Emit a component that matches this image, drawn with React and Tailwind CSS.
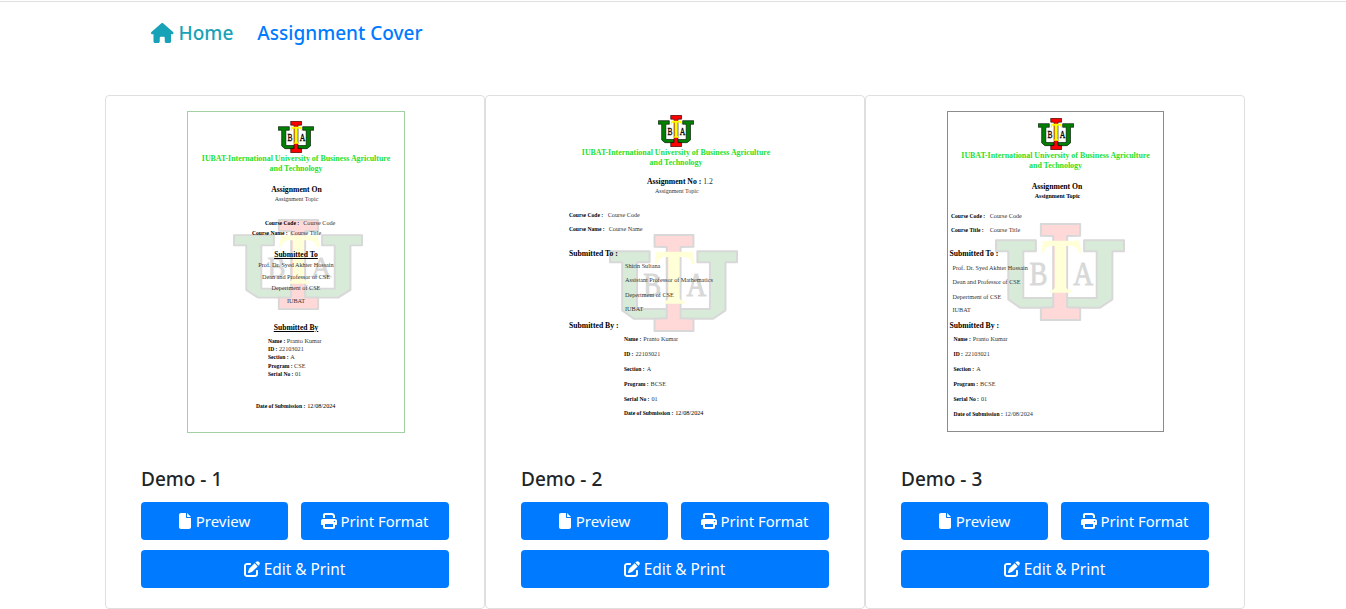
import React from "react";
import { FaHouse, FaFile, FaPrint, FaPenToSquare } from "react-icons/fa6";

function Emblem({ className }) {
  return (
    <svg viewBox="-3 -3 391 294" preserveAspectRatio="none" className={className}>
      <g stroke="#000" strokeWidth="6" strokeLinejoin="round">
        <path fill="#008000" d="M0 49H120V82H82V222H173V251H72L37 226V82H0Z" />
        <path fill="#008000" d="M385 49H265V82H303V222H212V251H313L350 226V82H385Z" />
        <path fill="#f00" d="M135 0H253V35L214 36V250L253 251V288H135V251L172 250V36L135 35Z" />
      </g>
      <path
        fill="#ff0"
        d="M135 88L141 50H251L257 88H250Q246 68 228 66H211V190Q212 197 227 199V206H165V199Q176 197 177 190V66H164Q146 68 142 88Z"
      />
      <g fontFamily="Liberation Serif, serif" fontSize="98" fill="#000" stroke="#000" strokeWidth="3" textAnchor="middle">
        <text x="128" y="183" textLength="54" lengthAdjust="spacingAndGlyphs">B</text>
        <text x="262" y="183" textLength="60" lengthAdjust="spacingAndGlyphs">A</text>
      </g>
    </svg>
  );
}

const covers = [
  {
    name: "Demo - 1",
    frame: "ml-0.5 w-[218px] h-[322px] border-[#a3d0a5]",
    mark: "left-[45px] top-[107px] w-[130px] h-[91px]",
    logo: "mt-[9px]",
    title: "mt-px",
    rows: [
      { c: "mt-[11.5px] pl-px text-center text-[7.7px]", b: "Assignment On" },
      { c: "mt-[1.5px] pl-px text-center text-[6px]", t: "Assignment Topic" },
      { c: "mt-[15.5px] pl-[77px]", b: "Course Code :", t: "Course Code", g: "ml-[4px]" },
      { c: "mt-[2.5px] pl-[64px]", b: "Course Name :", t: "Course Title", g: "ml-[3px]" },
      { c: "mt-[13.5px] text-center text-[7.6px] underline", b: "Submitted To" },
      { c: "mt-[2.5px] text-center", t: "Prof. Dr. Syed Akhter Hossain" },
      { c: "mt-[3.5px] text-center", t: "Dean and Professor of CSE" },
      { c: "mt-[3.5px] text-center", t: "Depertment of CSE" },
      { c: "mt-[4.5px] text-center", t: "IUBAT" },
      { c: "mt-[19px] text-center text-[7.6px] underline", b: "Submitted By" },
      { c: "mt-[5px] pl-[80px]", b: "Name :", t: "Pranto Kumar", g: "ml-[1.5px]" },
      { c: "pl-[80px]", b: "ID :", t: "22103021", g: "ml-[1.5px]" },
      { c: "mt-[0.5px] pl-[80px]", b: "Section :", t: "A", g: "ml-[1.5px]" },
      { c: "mt-[0.5px] pl-[80px]", b: "Program :", t: "CSE", g: "ml-[1.5px]" },
      { c: "pl-[80px]", b: "Serial No :", t: "01", g: "ml-[1.5px]" },
      { c: "mt-[24px] pl-[68px]", b: "Date of Submission :", t: "12/08/2024", g: "ml-[2px] text-black" },
    ],
  },
  {
    name: "Demo - 2",
    frame: "ml-0.5 w-[218px] h-[322px] border-transparent",
    mark: "left-[41px] top-[122px] w-[129px] h-[98px]",
    logo: "mt-[3px]",
    title: "mt-[0.5px]",
    rows: [
      { c: "mt-[10.5px] pl-[79px] text-[7.7px]", b: "Assignment No :", t: "1.2", g: "ml-[2px] text-[7.7px]" },
      { c: "mt-[1px] pl-[87px] text-[6px]", t: "Assignment Topic" },
      { c: "mt-[16px] pl-px", b: "Course Code :", t: "Course Code", g: "ml-[4.5px]" },
      { c: "mt-[6px] pl-px", b: "Course Name :", t: "Course Name", g: "ml-[4px]" },
      { c: "mt-[16.5px] pl-px text-[7.7px]", b: "Submitted To :" },
      { c: "mt-[4px] pl-[57px]", t: "Shirin Sultana" },
      { c: "mt-[6.5px] pl-[57px]", t: "Assistant Professor of Mathematics" },
      { c: "mt-[6.5px] pl-[57px]", t: "Depertment of CSE" },
      { c: "mt-[6.5px] pl-[57px]", t: "IUBAT" },
      { c: "mt-[8.5px] pl-px text-[7.7px]", b: "Submitted By :" },
      { c: "mt-[5.5px] pl-[56px]", b: "Name :", t: "Pranto Kumar", g: "ml-[2px]" },
      { c: "mt-[7px] pl-[56px]", b: "ID :", t: "22103021", g: "ml-[2px]" },
      { c: "mt-[7px] pl-[56px]", b: "Section :", t: "A", g: "ml-[2px]" },
      { c: "mt-[7px] pl-[56px]", b: "Program :", t: "BCSE", g: "ml-[2px]" },
      { c: "mt-[7px] pl-[56px]", b: "Serial No :", t: "01", g: "ml-[2px]" },
      { c: "mt-[6px] pl-[56px]", b: "Date of Submission :", t: "12/08/2024", g: "ml-[2px] text-black" },
    ],
  },
  {
    name: "Demo - 3",
    frame: "w-[217px] h-[321px] border-[#8c8c8c]",
    mark: "left-[47px] top-[111px] w-[130px] h-[98px]",
    logo: "mt-[6px] translate-x-px",
    title: "mt-[0.5px] pl-px",
    rows: [
      { c: "mt-[12px] pl-[4px] text-center text-[7.7px]", b: "Assignment On" },
      { c: "mt-[1.5px] pl-[5px] text-center text-[6px]", b: "Assignment Topic" },
      { c: "mt-[12px] pl-[3.5px]", b: "Course Code :", t: "Course Code", g: "ml-[4.5px]" },
      { c: "mt-[6px] pl-[3.5px]", b: "Course Title :", t: "Course Title", g: "ml-[6px]" },
      { c: "mt-[16px] pl-[2px] text-[7.7px]", b: "Submitted To :" },
      { c: "mt-[5.5px] pl-[5px]", t: "Prof. Dr. Syed Akhter Hossain" },
      { c: "mt-[6.5px] pl-[5px]", t: "Dean and Professor of CSE" },
      { c: "mt-[6.5px] pl-[5px]", t: "Depertment of CSE" },
      { c: "mt-[5px] pl-[5px]", t: "IUBAT" },
      { c: "mt-[8.5px] pl-[2px] text-[7.7px]", b: "Submitted By :" },
      { c: "mt-[5px] pl-[6px]", b: "Name :", t: "Pranto Kumar", g: "ml-[2px]" },
      { c: "mt-[6.5px] pl-[6px]", b: "ID :", t: "22103021", g: "ml-[2px]" },
      { c: "mt-[7px] pl-[6px]", b: "Section :", t: "A", g: "ml-[2px]" },
      { c: "mt-[7px] pl-[6px]", b: "Program :", t: "BCSE", g: "ml-[2px]" },
      { c: "mt-[7px] pl-[6px]", b: "Serial No :", t: "01", g: "ml-[2px]" },
      { c: "mt-[7px] pl-[6px]", b: "Date of Submission :", t: "12/08/2024", g: "ml-[2px]" },
    ],
  },
];

function Row({ c, b, t, g = "" }) {
  const size = b && t ? "text-[5.6px]" : "text-[6.2px]";
  const own = c.includes("text-[");
  return (
    <div className={`h-2 whitespace-nowrap leading-[8px] ${own ? "" : size} ${c}`}>
      {b && <span className="font-bold text-black">{b}</span>}
      {t && (
        <span className={`${g.includes("text-black") ? "" : "text-[#333]"} ${b && !g.includes("text-[") ? "text-[6.2px]" : ""} ${g}`}>
          {t}
        </span>
      )}
    </div>
  );
}

function Cover({ frame, mark, logo, title, rows }) {
  return (
    <div className={`relative shrink-0 border bg-white font-['Liberation_Serif',serif] ${frame}`}>
      <Emblem className={`absolute opacity-15 ${mark}`} />
      <div className="relative flow-root">
        <Emblem className={`mx-auto block h-8 w-9 ${logo}`} />
        <div className={`text-center text-[7.9px] leading-[10px] font-bold whitespace-nowrap text-[#1fdf2f] ${title}`}>
          IUBAT-International University of Business Agriculture
          <br />
          and Technology
        </div>
        {rows.map((r, i) => (
          <Row key={i} {...r} />
        ))}
      </div>
    </div>
  );
}

function Button({ icon: Icon, children, className = "" }) {
  return (
    <button className={`flex h-[38px] items-center justify-center rounded bg-[#007bff] text-white ${className}`}>
      <Icon className="size-4 shrink-0" />
      <span className="pt-px">{children}</span>
    </button>
  );
}

function Card({ cover }) {
  return (
    <article className="flex h-[514px] w-[380px] flex-col rounded border border-[#dfdfdf] bg-white pt-[15px]">
      <div className="flex h-[322px] justify-center">
        <Cover {...cover} />
      </div>
      <div className="px-[35px] pt-[34px]">
        <h5 className="mb-2 h-[27px] text-[19px] leading-6 font-medium text-[#212529]">{cover.name}</h5>
        <div className="flex justify-between">
          <Button icon={FaFile} className="w-[147px] gap-[3px] pr-0.5 text-[15px]">Preview</Button>
          <Button icon={FaPrint} className="w-[148px] gap-1 pr-px text-[14.9px]">Print Format</Button>
        </div>
        <Button icon={FaPenToSquare} className="mt-2.5 w-full gap-1 pr-px text-[15.4px]">Edit &amp; Print</Button>
      </div>
    </article>
  );
}

export default function App() {
  return (
    <div className="h-[609px] overflow-hidden bg-white pt-px font-['Noto_Sans','Open_Sans',sans-serif]">
      <nav className="flex h-[94px] items-start border-t border-[#dfe0e1] pt-[19px] pl-[151px] text-[19.05px] leading-6 font-medium">
        <a className="flex items-center gap-[5px] text-[#17a2b8]">
          <FaHouse className="h-5 w-[22.5px]" />
          Home
        </a>
        <a className="ml-6 text-[#007bff]">Assignment Cover</a>
      </nav>
      <main className="ml-[105px] flex">
        {covers.map((c) => (
          <Card key={c.name} cover={c} />
        ))}
      </main>
    </div>
  );
}
